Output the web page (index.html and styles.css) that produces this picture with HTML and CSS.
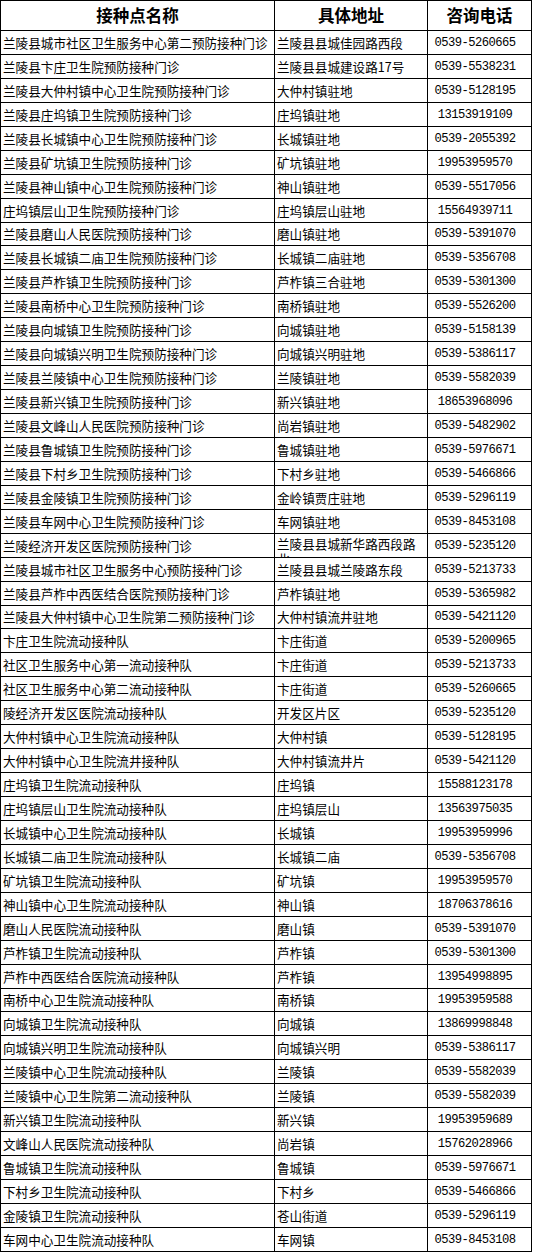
FILE: index.html
```html
<!DOCTYPE html>
<html lang="zh-CN">
<head>
<meta charset="utf-8">
<title>接种点</title>
<link rel="stylesheet" href="styles.css">
</head>
<body>
<div class="sheet">
  <div class="cell head">接种点名称</div><div class="cell head">具体地址</div><div class="cell head">咨询电话</div>
  <div class="cell">兰陵县城市社区卫生服务中心第二预防接种门诊</div><div class="cell">兰陵县县城佳园路西段</div><div class="cell tel">0539-5260665</div>
  <div class="cell">兰陵县卞庄卫生院预防接种门诊</div><div class="cell">兰陵县县城建设路17号</div><div class="cell tel">0539-5538231</div>
  <div class="cell">兰陵县大仲村镇中心卫生院预防接种门诊</div><div class="cell">大仲村镇驻地</div><div class="cell tel">0539-5128195</div>
  <div class="cell">兰陵县庄坞镇卫生院预防接种门诊</div><div class="cell">庄坞镇驻地</div><div class="cell tel">13153919109</div>
  <div class="cell">兰陵县长城镇中心卫生院预防接种门诊</div><div class="cell">长城镇驻地</div><div class="cell tel">0539-2055392</div>
  <div class="cell">兰陵县矿坑镇卫生院预防接种门诊</div><div class="cell">矿坑镇驻地</div><div class="cell tel">19953959570</div>
  <div class="cell">兰陵县神山镇中心卫生院预防接种门诊</div><div class="cell">神山镇驻地</div><div class="cell tel">0539-5517056</div>
  <div class="cell">庄坞镇层山卫生院预防接种门诊</div><div class="cell">庄坞镇层山驻地</div><div class="cell tel">15564939711</div>
  <div class="cell">兰陵县磨山人民医院预防接种门诊</div><div class="cell">磨山镇驻地</div><div class="cell tel">0539-5391070</div>
  <div class="cell">兰陵县长城镇二庙卫生院预防接种门诊</div><div class="cell">长城镇二庙驻地</div><div class="cell tel">0539-5356708</div>
  <div class="cell">兰陵县芦柞镇卫生院预防接种门诊</div><div class="cell">芦柞镇三合驻地</div><div class="cell tel">0539-5301300</div>
  <div class="cell">兰陵县南桥中心卫生院预防接种门诊</div><div class="cell">南桥镇驻地</div><div class="cell tel">0539-5526200</div>
  <div class="cell">兰陵县向城镇卫生院预防接种门诊</div><div class="cell">向城镇驻地</div><div class="cell tel">0539-5158139</div>
  <div class="cell">兰陵县向城镇兴明卫生院预防接种门诊</div><div class="cell">向城镇兴明驻地</div><div class="cell tel">0539-5386117</div>
  <div class="cell">兰陵县兰陵镇中心卫生院预防接种门诊</div><div class="cell">兰陵镇驻地</div><div class="cell tel">0539-5582039</div>
  <div class="cell">兰陵县新兴镇卫生院预防接种门诊</div><div class="cell">新兴镇驻地</div><div class="cell tel">18653968096</div>
  <div class="cell">兰陵县文峰山人民医院预防接种门诊</div><div class="cell">尚岩镇驻地</div><div class="cell tel">0539-5482902</div>
  <div class="cell">兰陵县鲁城镇卫生院预防接种门诊</div><div class="cell">鲁城镇驻地</div><div class="cell tel">0539-5976671</div>
  <div class="cell">兰陵县下村乡卫生院预防接种门诊</div><div class="cell">下村乡驻地</div><div class="cell tel">0539-5466866</div>
  <div class="cell">兰陵县金陵镇卫生院预防接种门诊</div><div class="cell">金岭镇贾庄驻地</div><div class="cell tel">0539-5296119</div>
  <div class="cell">兰陵县车网中心卫生院预防接种门诊</div><div class="cell">车网镇驻地</div><div class="cell tel">0539-8453108</div>
  <div class="cell">兰陵经济开发区医院预防接种门诊</div><div class="cell wrap">兰陵县县城新华路西段路北</div><div class="cell tel">0539-5235120</div>
  <div class="cell">兰陵县城市社区卫生服务中心预防接种门诊</div><div class="cell">兰陵县县城兰陵路东段</div><div class="cell tel">0539-5213733</div>
  <div class="cell">兰陵县芦柞中西医结合医院预防接种门诊</div><div class="cell">芦柞镇驻地</div><div class="cell tel">0539-5365982</div>
  <div class="cell">兰陵县大仲村镇中心卫生院第二预防接种门诊</div><div class="cell">大仲村镇流井驻地</div><div class="cell tel">0539-5421120</div>
  <div class="cell">卞庄卫生院流动接种队</div><div class="cell">卞庄街道</div><div class="cell tel">0539-5200965</div>
  <div class="cell">社区卫生服务中心第一流动接种队</div><div class="cell">卞庄街道</div><div class="cell tel">0539-5213733</div>
  <div class="cell">社区卫生服务中心第二流动接种队</div><div class="cell">卞庄街道</div><div class="cell tel">0539-5260665</div>
  <div class="cell">陵经济开发区医院流动接种队</div><div class="cell">开发区片区</div><div class="cell tel">0539-5235120</div>
  <div class="cell">大仲村镇中心卫生院流动接种队</div><div class="cell">大仲村镇</div><div class="cell tel">0539-5128195</div>
  <div class="cell">大仲村镇中心卫生院流井接种队</div><div class="cell">大仲村镇流井片</div><div class="cell tel">0539-5421120</div>
  <div class="cell">庄坞镇卫生院流动接种队</div><div class="cell">庄坞镇</div><div class="cell tel">15588123178</div>
  <div class="cell">庄坞镇层山卫生院流动接种队</div><div class="cell">庄坞镇层山</div><div class="cell tel">13563975035</div>
  <div class="cell">长城镇中心卫生院流动接种队</div><div class="cell">长城镇</div><div class="cell tel">19953959996</div>
  <div class="cell">长城镇二庙卫生院流动接种队</div><div class="cell">长城镇二庙</div><div class="cell tel">0539-5356708</div>
  <div class="cell">矿坑镇卫生院流动接种队</div><div class="cell">矿坑镇</div><div class="cell tel">19953959570</div>
  <div class="cell">神山镇中心卫生院流动接种队</div><div class="cell">神山镇</div><div class="cell tel">18706378616</div>
  <div class="cell">磨山人民医院流动接种队</div><div class="cell">磨山镇</div><div class="cell tel">0539-5391070</div>
  <div class="cell">芦柞镇卫生院流动接种队</div><div class="cell">芦柞镇</div><div class="cell tel">0539-5301300</div>
  <div class="cell">芦柞中西医结合医院流动接种队</div><div class="cell">芦柞镇</div><div class="cell tel">13954998895</div>
  <div class="cell">南桥中心卫生院流动接种队</div><div class="cell">南桥镇</div><div class="cell tel">19953959588</div>
  <div class="cell">向城镇卫生院流动接种队</div><div class="cell">向城镇</div><div class="cell tel">13869998848</div>
  <div class="cell">向城镇兴明卫生院流动接种队</div><div class="cell">向城镇兴明</div><div class="cell tel">0539-5386117</div>
  <div class="cell">兰陵镇中心卫生院流动接种队</div><div class="cell">兰陵镇</div><div class="cell tel">0539-5582039</div>
  <div class="cell">兰陵镇中心卫生院第二流动接种队</div><div class="cell">兰陵镇</div><div class="cell tel">0539-5582039</div>
  <div class="cell">新兴镇卫生院流动接种队</div><div class="cell">新兴镇</div><div class="cell tel">19953959689</div>
  <div class="cell">文峰山人民医院流动接种队</div><div class="cell">尚岩镇</div><div class="cell tel">15762028966</div>
  <div class="cell">鲁城镇卫生院流动接种队</div><div class="cell">鲁城镇</div><div class="cell tel">0539-5976671</div>
  <div class="cell">下村乡卫生院流动接种队</div><div class="cell">下村乡</div><div class="cell tel">0539-5466866</div>
  <div class="cell">金陵镇卫生院流动接种队</div><div class="cell">苍山街道</div><div class="cell tel">0539-5296119</div>
  <div class="cell">车网中心卫生院流动接种队</div><div class="cell">车网镇</div><div class="cell tel">0539-8453108</div>
</div>
</body>
</html>
```
FILE: styles.css
```css
html, body {
  margin: 0;
  padding: 0;
  background: #fff;
}

.sheet {
  display: grid;
  grid-template-columns: 274px 153px 104px;
  grid-template-rows: 30px repeat(51, 23.95px);
  width: 532px;
  border-top: 1px solid #000;
  border-left: 1px solid #000;
  box-sizing: border-box;
  font-family: "Noto Sans CJK SC", "Noto Sans", sans-serif;
  font-size: 12.6px;
  color: #000;
}

.cell {
  border-right: 1px solid #000;
  border-bottom: 1px solid #000;
  box-sizing: border-box;
  overflow: hidden;
  display: flex;
  align-items: center;
  padding-left: 2px;
  white-space: nowrap;
  line-height: 15px;
}

.head {
  justify-content: center;
  padding-left: 0;
  font-weight: 700;
  font-size: 16.5px;
}

.tel {
  justify-content: center;
  padding: 2px 9px 0 0;
  font-family: "Liberation Mono", "DejaVu Sans Mono", monospace;
  font-size: 12.2px;
  letter-spacing: -0.55px;
}

.wrap {
  white-space: normal;
  align-items: flex-start;
  padding-top: 2px;
}
```
